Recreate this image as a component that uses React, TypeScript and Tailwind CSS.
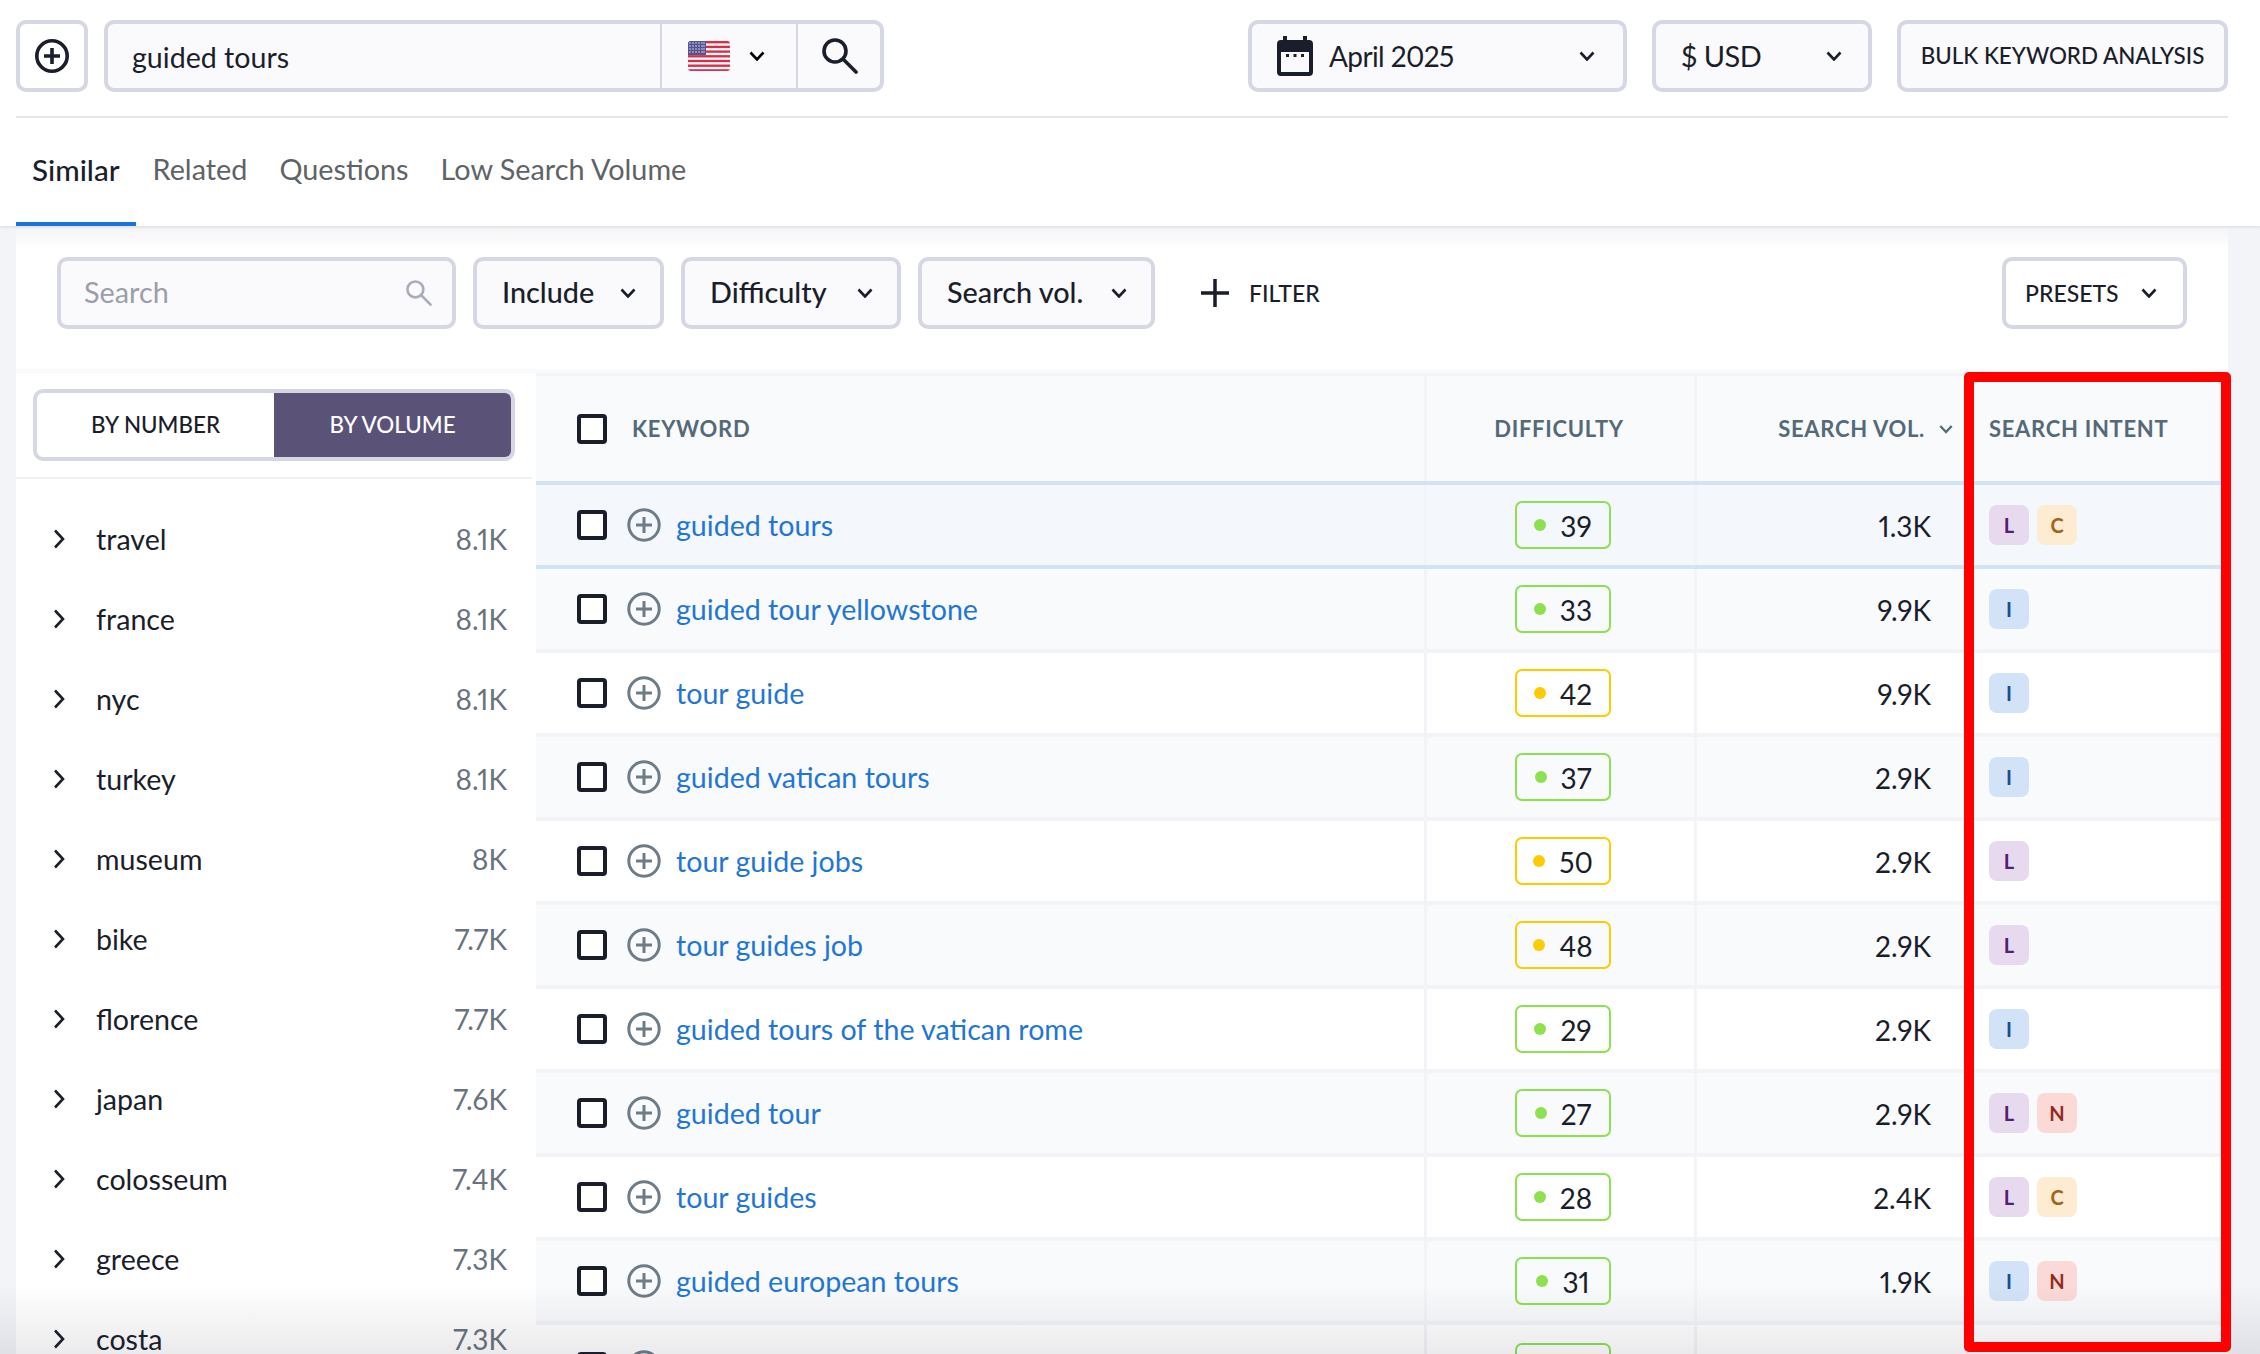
const FONT = "font-['Lato',sans-serif] proportional-nums"

const keywords = [
  { text: "guided tours", diff: 39, vol: "1.3K", intents: ["L", "C"] },
  { text: "guided tour yellowstone", diff: 33, vol: "9.9K", intents: ["I"] },
  { text: "tour guide", diff: 42, vol: "9.9K", intents: ["I"] },
  { text: "guided vatican tours", diff: 37, vol: "2.9K", intents: ["I"] },
  { text: "tour guide jobs", diff: 50, vol: "2.9K", intents: ["L"] },
  { text: "tour guides job", diff: 48, vol: "2.9K", intents: ["L"] },
  { text: "guided tours of the vatican rome", diff: 29, vol: "2.9K", intents: ["I"] },
  { text: "guided tour", diff: 27, vol: "2.9K", intents: ["L", "N"] },
  { text: "tour guides", diff: 28, vol: "2.4K", intents: ["L", "C"] },
  { text: "guided european tours", diff: 31, vol: "1.9K", intents: ["I", "N"] },
]

const groups = [
  ["travel", "8.1K"],
  ["france", "8.1K"],
  ["nyc", "8.1K"],
  ["turkey", "8.1K"],
  ["museum", "8K"],
  ["bike", "7.7K"],
  ["florence", "7.7K"],
  ["japan", "7.6K"],
  ["colosseum", "7.4K"],
  ["greece", "7.3K"],
  ["costa", "7.3K"],
]

const intentStyles: Record<string, string> = {
  L: "bg-[#e7d9ee] text-[#4f2170]",
  C: "bg-[#fdecd2] text-[#a0611a]",
  I: "bg-[#d2e3f7] text-[#1c4e8f]",
  N: "bg-[#fbd9d6] text-[#922b21]",
}

function Chevron({ className = "" }: { className?: string }) {
  return (
    <svg viewBox="0 0 16 10" className={`w-4 h-2.5 ${className}`} fill="none" stroke="currentColor" strokeWidth="2.6">
      <path d="M1.5 1.5l6.5 7 6.5-7" />
    </svg>
  )
}

function PlusCircle({ className = "", width = 3 }: { className?: string; width?: number }) {
  return (
    <svg viewBox="0 0 34 34" className={className} fill="none" stroke="currentColor" strokeWidth={width}>
      <circle cx="17" cy="17" r="15.2" />
      <path d="M17 9v16M9 17h16" />
    </svg>
  )
}

function SearchIcon({ className = "", width = 3.6 }: { className?: string; width?: number }) {
  return (
    <svg viewBox="0 0 36 36" className={className} fill="none" stroke="currentColor" strokeWidth={width} strokeLinecap="round">
      <circle cx="13" cy="13" r="11" />
      <path d="M21.5 21.5l12.5 12.5" />
    </svg>
  )
}

function UsFlag() {
  return (
    <svg viewBox="0 0 42 30" className="w-[42px] h-[30px] rounded-[3px]">
      <rect width="42" height="30" fill="#fff" />
      {[0, 1, 2, 3, 4, 5, 6].map((i) => (
        <rect key={i} y={i * 4.7} width="42" height="2.4" fill="#d8304a" />
      ))}
      <rect width="18" height="14" fill="#54558f" />
      {[2, 5, 8, 11].map((y) =>
        [2, 5, 8, 11, 14, 16].map((x) => <circle key={`${x}-${y}`} cx={x} cy={y} r="0.9" fill="#a9abc8" />)
      )}
    </svg>
  )
}

function CalendarIcon() {
  return (
    <svg viewBox="0 0 36 40" className="w-9 h-10 text-[#1a1e2b]">
      <path fill="currentColor" d="M6 0h4v4h16V0h4v4h2a4 4 0 0 1 4 4v28a4 4 0 0 1-4 4H4a4 4 0 0 1-4-4V8a4 4 0 0 1 4-4h2z" />
      <rect x="4" y="16" width="28" height="20" fill="#fafafd" />
      <rect x="9" y="18" width="3" height="3" fill="currentColor" />
      <rect x="16.5" y="18" width="3" height="3" fill="currentColor" />
      <rect x="24" y="18" width="3" height="3" fill="currentColor" />
    </svg>
  )
}

function Checkbox() {
  return <span className="block w-[30px] h-[30px] shrink-0 rounded-[4px] border-4 border-[#1a1e2b] bg-white" />
}

function Dropdown({ label, w }: { label: string; w: string }) {
  return (
    <button className={`${w} ml-[17px] h-[72px] flex items-center justify-between rounded-[10px] border-4 border-[#d5d8e4] bg-[#fafafd] pl-[25px] pr-[24px] text-[28.8px] text-[#1a1e2b] font-medium`}>
      {label}
      <Chevron />
    </button>
  )
}

function KeywordRow({ k, i }: { k: (typeof keywords)[number]; i: number }) {
  const bg = i === 0 ? "bg-[#f4f7fc]" : i % 2 === 1 ? "bg-[#f9fafc]" : "bg-white"
  const line = i === 0 ? "border-[#d3e3f6]" : "border-[#f3f4f8]"
  const yellow = k.diff >= 40
  return (
    <div className={`grid grid-cols-[891px_270px_270px_255px] h-[84px] border-b-4 ${bg} ${line}`}>
      <div className="flex items-center pl-[41px] border-r-[3px] border-[#f3f4f8]">
        <Checkbox />
        <PlusCircle className="w-[34px] h-[34px] ml-5 shrink-0 text-[#6e7c87]" />
        <a className="ml-[15px] pt-[1px] text-[28.6px] text-[#1f76d6]">{k.text}</a>
      </div>
      <div className="flex items-center pl-[88px] border-r-[3px] border-[#f3f4f8]">
        <div className={`w-[96px] h-[48px] flex items-center justify-center gap-[14px] rounded-[7px] border-2 ${yellow ? "border-[#fdcb00]" : "border-[#8de04f]"}`}>
          <span className={`w-3 h-3 rounded-full ${yellow ? "bg-[#fdcb00]" : "bg-[#8de04f]"}`} />
          <span className="pt-[2px] text-[28px] text-[#1a1e2b]">{k.diff}</span>
        </div>
      </div>
      <div className="flex items-center justify-end pt-[1px] pr-[36px] text-[28px] text-[#1a1e2b]">{k.vol}</div>
      <div className="flex items-center gap-2 pl-[22px]">
        {k.intents.map((t) => (
          <span key={t} className={`w-10 h-10 flex items-center justify-center rounded-lg text-[20px] font-bold ${intentStyles[t]}`}>
            {t}
          </span>
        ))}
      </div>
    </div>
  )
}

export default function App() {
  return (
    <div className={`relative h-[1354px] w-[2260px] overflow-hidden bg-[#f3f4f8] ${FONT}`}>
      {/* Top bar and tabs */}
      <header className="relative z-10 h-[226px] bg-white shadow-[0_1px_3px_rgba(30,30,60,0.12)]">
        <div className="ml-4 mr-8 border-b-2 border-[#e4e6ef] pt-5 pb-6 h-[118px] flex items-start">
          <button className="w-[72px] h-[72px] flex items-center justify-center rounded-[10px] border-4 border-[#d5d8e4] bg-white">
            <PlusCircle className="w-[34px] h-[34px] text-[#1a1e2b]" width={3.6} />
          </button>
          <div className="ml-4 w-[780px] h-[72px] flex rounded-[10px] border-4 border-[#d5d8e4] bg-[#fafafd]">
            <div className="flex-1 flex items-center pl-6 pt-[2px] text-[28.6px] text-[#1a1e2b]">guided tours</div>
            <div className="w-[136px] flex items-center gap-[19px] pl-[26px] border-l-2 border-[#d5d8e4]">
              <UsFlag />
              <Chevron />
            </div>
            <div className="w-[84px] flex items-center pl-[24px] border-l-2 border-[#d5d8e4]">
              <SearchIcon className="w-9 h-9 text-[#1a1e2b]" />
            </div>
          </div>
          <div className="ml-auto flex gap-[25px]">
            <button className="w-[379px] h-[72px] flex items-center rounded-[10px] border-4 border-[#d5d8e4] bg-[#fafafd] pl-[25px] pr-[28px] text-[28px] tracking-[-0.6px] text-[#1a1e2b]">
              <CalendarIcon />
              <span className="ml-4">April 2025</span>
              <Chevron className="ml-auto" />
            </button>
            <button className="w-[220px] h-[72px] flex items-center justify-between rounded-[10px] border-4 border-[#d5d8e4] bg-[#fafafd] pl-[25px] pr-[26px] text-[29px] tracking-[-0.5px] text-[#1a1e2b]">
              $ USD
              <Chevron />
            </button>
            <button className="w-[331px] h-[72px] rounded-[10px] border-4 border-[#d5d8e4] bg-[#fafafd] text-[22.4px] font-medium text-[#1a1e2b]">
              BULK KEYWORD ANALYSIS
            </button>
          </div>
        </div>
        <nav className="ml-4 h-[108px] flex text-[28.8px] text-[#5f6368]">
          <a className="px-4 flex items-center border-b-4 border-[#1a73d8] text-[29.6px] text-[#1a1e2b] font-medium">Similar</a>
          <div className="ml-[17px] flex items-center gap-[32px] pb-1">
            <a>Related</a>
            <a>Questions</a>
            <a>Low Search Volume</a>
          </div>
        </nav>
      </header>

      <main className="mx-4 w-[2212px] bg-white">
        {/* Filters */}
        <div className="h-[147px] pt-[31px] px-[41px] flex items-start border-b-4 border-[#f9fafc] bg-gradient-to-b from-[#f4f4f6] to-white to-[24px] bg-no-repeat">
          <div className="w-[399px] h-[72px] flex items-center justify-between rounded-[10px] border-4 border-[#d5d8e4] bg-[#fafafd] pl-[23px] pr-[20px] text-[28.8px] text-[#9a9ea8]">
            Search
            <SearchIcon className="w-[26px] h-[26px] text-[#a9adba]" />
          </div>
          <Dropdown label="Include" w="w-[191px]" />
          <Dropdown label="Difficulty" w="w-[220px]" />
          <Dropdown label="Search vol." w="w-[237px]" />
          <button className="ml-[46px] h-[72px] flex items-center gap-5 text-[23px] font-medium text-[#1a1e2b]">
            <svg viewBox="0 0 28 28" className="w-7 h-7" fill="none" stroke="currentColor" strokeWidth="3.5">
              <path d="M14 0v28M0 14h28" />
            </svg>
            FILTER
          </button>
          <button className="ml-auto w-[185px] h-[72px] flex items-center justify-between rounded-[10px] border-4 border-[#d5d8e4] bg-white pl-[19px] pr-[26px] text-[23px] font-medium text-[#1a1e2b]">
            PRESETS
            <Chevron />
          </button>
        </div>

        <div className="flex">
          {/* Keyword groups */}
          <aside className="w-[516px] shrink-0">
            <div className="h-[106px] pt-4 pl-[17px] border-b-2 border-[#f0f1f6]">
              <div className="w-[482px] h-[72px] flex rounded-[10px] border-4 border-[#d5d8e4] text-[22.4px] font-medium">
                <div className="w-[237px] flex items-center justify-center text-[#1a1e2b]">BY NUMBER</div>
                <div className="flex-1 flex items-center justify-center rounded-r-[6px] bg-[#5a5277] text-white">BY VOLUME</div>
              </div>
            </div>
            <ul className="pt-[21px] pl-[37px] pr-[25px]">
              {groups.map(([name, vol]) => (
                <li key={name} className="h-20 flex items-center text-[28.6px] text-[#1a1e2b]">
                  <svg viewBox="0 0 13 20" className="w-[13px] h-5 -mt-0.5" fill="none" stroke="currentColor" strokeWidth="2.6">
                    <path d="M2 1.5l8 8.5-8 8.5" />
                  </svg>
                  <span className="ml-[30px] pb-[2px]">{name}</span>
                  <span className="ml-auto pb-[2px] text-[28px] text-[#68737d]">{vol}</span>
                </li>
              ))}
            </ul>
          </aside>

          {/* Keyword table */}
          <section className="ml-1 w-[1686px] border-t-[3px] border-[#f3f4f8]">
            <div className="grid grid-cols-[891px_270px_270px_255px] h-[109px] border-b-4 border-[#d3e3f6] bg-[#f9fafc] text-[22px] font-bold tracking-[0.7px] text-[#546a78]">
              <div className="flex items-center pl-[41px] border-r-[3px] border-[#f3f4f8]">
                <Checkbox />
                <span className="ml-[25px]">KEYWORD</span>
              </div>
              <div className="flex items-center justify-center pr-[3px] border-r-[3px] border-[#f3f4f8]">DIFFICULTY</div>
              <div className="flex items-center justify-end gap-[14px] pr-[14px]">
                SEARCH VOL.
                <Chevron className="!w-[14px]" />
              </div>
              <div className="flex items-center pl-[22px]">SEARCH INTENT</div>
            </div>
            {keywords.map((k, i) => (
              <KeywordRow key={k.text} k={k} i={i} />
            ))}
            <div className="grid grid-cols-[891px_270px_270px_255px] h-[84px] bg-white">
              <div className="flex items-center pl-[41px] border-r-[3px] border-[#f3f4f8]">
                <Checkbox />
                <PlusCircle className="w-[34px] h-[34px] ml-5 text-[#6e7c87]" />
              </div>
              <div className="flex items-center pl-[88px] border-r-[3px] border-[#f3f4f8]">
                <div className="w-[96px] h-[48px] rounded-[7px] border-2 border-[#8de04f]" />
              </div>
            </div>
          </section>
        </div>
      </main>

      {/* Scroll fade along the bottom edge */}
      <div className="absolute inset-x-0 bottom-0 h-[70px] bg-gradient-to-b from-transparent to-[rgba(30,30,50,0.09)] pointer-events-none" />

      {/* Red highlight round the intent column */}
      <div className="absolute left-[1964px] top-[372px] w-[267px] h-[980px] rounded-[5px] border-[10px] border-[#ff0000] pointer-events-none" />
    </div>
  )
}
